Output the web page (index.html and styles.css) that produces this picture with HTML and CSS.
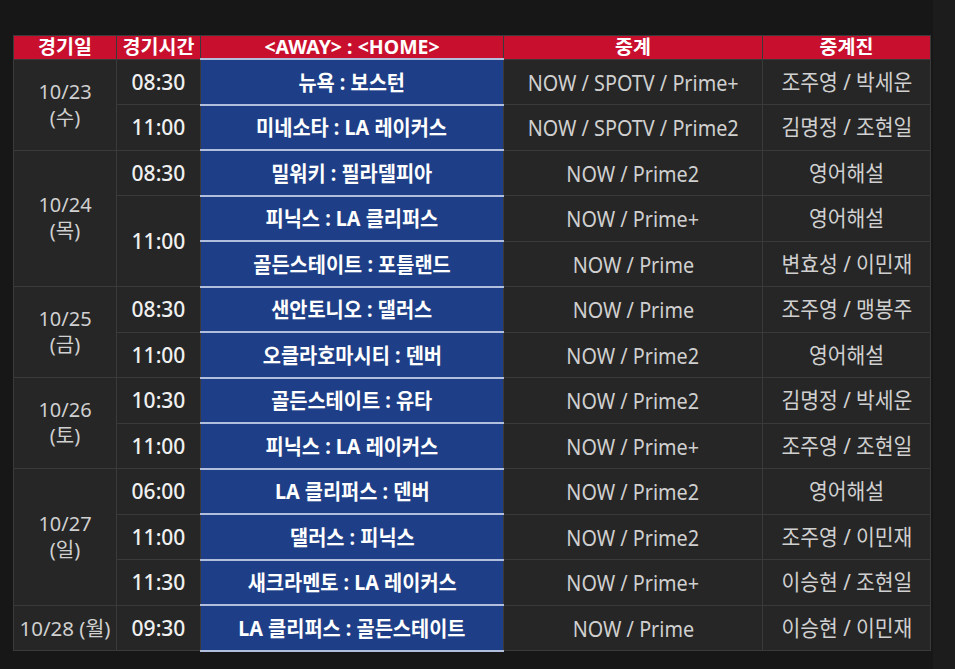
FILE: index.html
```html
<!DOCTYPE html>
<html lang="ko">
<head>
<meta charset="utf-8">
<link rel="stylesheet" href="styles.css">
</head>
<body>
<div class="page">
  <main class="main">
    <table class="sched">
      <colgroup>
        <col class="c-date"><col class="c-time"><col class="c-match"><col class="c-tv"><col class="c-cast">
      </colgroup>
      <thead>
        <tr><th>경기일</th><th>경기시간</th><th>&lt;AWAY&gt; : &lt;HOME&gt;</th><th>중계</th><th>중계진</th></tr>
      </thead>
      <tbody>
        <tr><td class="date" rowspan="2"><span class="d">10/23</span><span class="d">(수)</span></td><td class="time">08:30</td><td class="match"><span class="t">뉴욕 : 보스턴</span></td><td class="tv"><span class="t">NOW / SPOTV / Prime+</span></td><td class="cast"><span class="t">조주영 / 박세운</span></td></tr>
        <tr><td class="time">11:00</td><td class="match"><span class="t">미네소타 : LA 레이커스</span></td><td class="tv"><span class="t">NOW / SPOTV / Prime2</span></td><td class="cast"><span class="t">김명정 / 조현일</span></td></tr>
        <tr><td class="date" rowspan="3"><span class="d">10/24</span><span class="d">(목)</span></td><td class="time">08:30</td><td class="match"><span class="t">밀워키 : 필라델피아</span></td><td class="tv"><span class="t">NOW / Prime2</span></td><td class="cast"><span class="t">영어해설</span></td></tr>
        <tr><td class="time" rowspan="2">11:00</td><td class="match"><span class="t">피닉스 : LA 클리퍼스</span></td><td class="tv"><span class="t">NOW / Prime+</span></td><td class="cast"><span class="t">영어해설</span></td></tr>
        <tr><td class="match"><span class="t">골든스테이트 : 포틀랜드</span></td><td class="tv"><span class="t">NOW / Prime</span></td><td class="cast"><span class="t">변효성 / 이민재</span></td></tr>
        <tr><td class="date" rowspan="2"><span class="d">10/25</span><span class="d">(금)</span></td><td class="time">08:30</td><td class="match"><span class="t">샌안토니오 : 댈러스</span></td><td class="tv"><span class="t">NOW / Prime</span></td><td class="cast"><span class="t">조주영 / 맹봉주</span></td></tr>
        <tr><td class="time">11:00</td><td class="match"><span class="t">오클라호마시티 : 덴버</span></td><td class="tv"><span class="t">NOW / Prime2</span></td><td class="cast"><span class="t">영어해설</span></td></tr>
        <tr><td class="date" rowspan="2"><span class="d">10/26</span><span class="d">(토)</span></td><td class="time">10:30</td><td class="match"><span class="t">골든스테이트 : 유타</span></td><td class="tv"><span class="t">NOW / Prime2</span></td><td class="cast"><span class="t">김명정 / 박세운</span></td></tr>
        <tr><td class="time">11:00</td><td class="match"><span class="t">피닉스 : LA 레이커스</span></td><td class="tv"><span class="t">NOW / Prime+</span></td><td class="cast"><span class="t">조주영 / 조현일</span></td></tr>
        <tr><td class="date" rowspan="3"><span class="d">10/27</span><span class="d">(일)</span></td><td class="time">06:00</td><td class="match"><span class="t">LA 클리퍼스 : 덴버</span></td><td class="tv"><span class="t">NOW / Prime2</span></td><td class="cast"><span class="t">영어해설</span></td></tr>
        <tr><td class="time">11:00</td><td class="match"><span class="t">댈러스 : 피닉스</span></td><td class="tv"><span class="t">NOW / Prime2</span></td><td class="cast"><span class="t">조주영 / 이민재</span></td></tr>
        <tr><td class="time">11:30</td><td class="match"><span class="t">새크라멘토 : LA 레이커스</span></td><td class="tv"><span class="t">NOW / Prime+</span></td><td class="cast"><span class="t">이승현 / 조현일</span></td></tr>
        <tr><td class="date single">10/28 (월)</td><td class="time">09:30</td><td class="match"><span class="t">LA 클리퍼스 : 골든스테이트</span></td><td class="tv"><span class="t">NOW / Prime</span></td><td class="cast"><span class="t">이승현 / 이민재</span></td></tr>
      </tbody>
    </table>
  </main>
  <aside class="edge"></aside>
</div>
</body>
</html>
```
FILE: styles.css
```css
html, body {
  margin: 0;
  padding: 0;
  background: #171717;
  height: 100%;
}
.page {
  display: flex;
  min-height: 669px;
  font-family: "Noto Sans", "Noto Sans CJK KR", sans-serif;
}
.main {
  flex: 0 0 933px;
  padding: 35px 0 0 13px;
  box-sizing: border-box;
}
.edge {
  flex: 1;
  background: #1c1c1c;
}
.sched {
  border-collapse: collapse;
  table-layout: fixed;
  width: 917px;
}
.c-date { width: 103px; }
.c-time { width: 84px; }
.c-match { width: 303px; }
.c-tv { width: 259px; }
.c-cast { width: 168px; }

.sched th {
  background: #c8102e;
  color: #fff;
  font-weight: 700;
  font-size: 19.5px;
  height: 22px;
  padding: 0;
  line-height: 22px;
  border: 1px solid #3a3a3a;
  text-align: center;
  white-space: nowrap;
}
.sched td {
  background: #262626;
  border: 1px solid #3a3a3a;
  height: 43.5px;
  padding: 0;
  text-align: center;
  vertical-align: middle;
  color: #d0d0d0;
  font-size: 19px;
  line-height: 24px;
  white-space: nowrap;
}
.t {
  display: inline-block;
}
.sched td.date {
  font-size: 20px;
  color: #d0d0d0;
}
.d {
  display: block;
  line-height: 26px;
}
.sched td.date.single {
  font-size: 20.5px;
}
.sched td.time {
  color: #f0f0f0;
  font-size: 21px;
  font-weight: 500;
}
.sched td.tv {
  font-size: 22px;
}
.sched td.tv .t {
  transform: scaleX(0.9);
}
.sched td.cast {
  font-size: 21.5px;
}
.sched td.cast .t {
  transform: scaleX(0.95);
}
.sched td.match {
  background: #1e3f87;
  color: #ffffff;
  font-weight: 700;
  font-size: 21px;
  border-top: 2px solid #b2bfdc;
  border-bottom: 2px solid #b2bfdc;
}
.sched td.match .t {
  transform: scaleX(0.94);
}
```
